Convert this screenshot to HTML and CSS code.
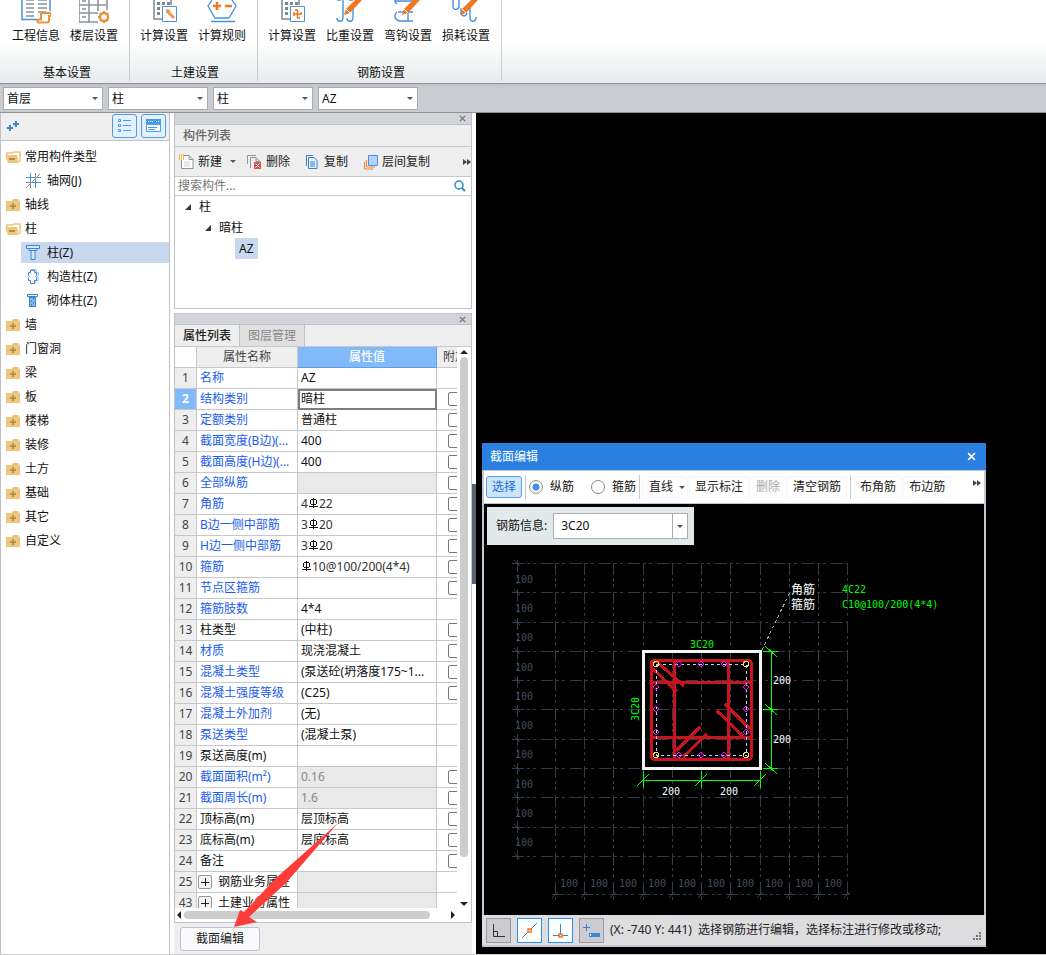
FILE: index.html
```html
<!DOCTYPE html>
<html lang="zh-CN">
<head>
    <meta charset="UTF-8">
    <meta name="viewport" content="width=device-width, initial-scale=1.0">
    <title>截面编辑</title>
    <link rel="stylesheet" href="styles.css">
</head>
<body>

    <!-- Shared icons -->
    <svg class="sprite" aria-hidden="true">
        <symbol id="folder" viewBox="0 0 16 14">
            <path d="M8 1h5l1 2H7z" fill="#e6be7c"/>
            <path d="M1 3h14v10H1z" fill="#eec67e"/>
            <path d="M5 8h6M8 5v6" stroke="#b8914f" stroke-width="2"/>
        </symbol>
        <symbol id="folder-open" viewBox="0 0 16 14">
            <path d="M2 5V3h6l1-1h6v10" fill="none" stroke="#eec67e" stroke-width="1.5"/>
            <path d="M0 5h12l2 8H3z" fill="#eec67e"/>
            <path d="M4 9h6" stroke="#b8914f" stroke-width="2"/>
        </symbol>
        <symbol id="rebar" viewBox="0 0 9 10">
            <path d="M4.500 0v10M2 1.500h5M1.500 2v4M7.500 2v4M2 6.500h5M0 8.500h9" fill="none" stroke="#111" shape-rendering="crispEdges"/>
        </symbol>
        <symbol id="more" viewBox="0 0 8 6">
            <path d="M0 0l4 3-4 3zM4 0l4 3-4 3z" fill="#444"/>
        </symbol>
        <symbol id="close" viewBox="0 0 8 8">
            <path d="M1 1l6 6M7 1L1 7" fill="none" stroke="currentColor" stroke-width="1.5"/>
        </symbol>
        <symbol id="calc" viewBox="0 0 30 24">
            <path d="M5 0v19h8M22 0v5" fill="none" stroke="#7a8790" stroke-width="1.5"/>
            <path d="M8 2h3v3H8zM13 2h3v3h-3zM18 2h3v3h-3zM8 7h3v3H8zM8 12h3v3H8z" fill="#7a8790"/>
            <path d="M13.500 6.500h14v15h-14z" fill="#fff" stroke="#4a90e2"/>
        </symbol>
        <symbol id="pencil" viewBox="0 0 18 16">
            <path d="M0 15l2-6 9-9h7L6 13z" fill="#f07820"/>
            <path d="M2 9l4 4" stroke="#fff"/>
        </symbol>
    </svg>

    <!-- Ribbon -->
    <header class="ribbon">
        <section class="ribbon-group">
            <div class="ribbon-buttons">
                <button class="ribbon-btn">
                    <svg width="30" height="24" viewBox="0 0 30 24"><path d="M1 0v19.500h15M29 0v11" fill="none" stroke="#4a90e2" stroke-width="1.500"/><path d="M5 4h8M17 4h9M5 8h8M17 8h9M5 12h8M17 12h8M5 16h8M5 0h8M17 0h9" stroke="#87929a" stroke-width="1.500"/><path d="M20 13h9c2 0 1 4-1 3v4c0 2-1 2.500-2 2.500h-9c-1 0-1-3 1-3h2z" fill="#fff" stroke="#e8923a" stroke-width="2"/></svg>
                    <span>工程信息</span>
                </button>
                <button class="ribbon-btn">
                    <svg width="30" height="24" viewBox="0 0 30 24"><path d="M0 5h27M0 13h19M0 22h19M0 0v22M10 0v22M19 0v11M28 0v10M3 1h4M3 9h4M3 17h4" fill="none" stroke="#87929a" stroke-width="1.500"/><circle cx="25" cy="17" r="4" fill="#fff" stroke="#e8923a" stroke-width="2.500"/><path d="M25 11v2M25 21v2M19 17h2M29 17h2M21 13l1 1M29 21l-1-1M29 13l-1 1M21 21l1-1" stroke="#e8923a" stroke-width="2"/></svg>
                    <span>楼层设置</span>
                </button>
            </div>
            <div class="ribbon-title">基本设置</div>
        </section>
        <section class="ribbon-group">
            <div class="ribbon-buttons">
                <button class="ribbon-btn">
                    <svg width="30" height="24" viewBox="0 0 30 24"><use href="#calc"/><path d="M18 11l7 7" stroke="#f09040" stroke-width="2.500"/><path d="M17 9v4h4v-3z" fill="#f09040"/></svg>
                    <span>计算设置</span>
                </button>
                <button class="ribbon-btn">
                    <svg width="30" height="24" viewBox="0 0 30 24"><path d="M5 0L1 6l7 12h14l7-12-4-6M4 21.500h24" fill="none" stroke="#4a90e2" stroke-width="1.300"/><path d="M6 6h8M10 2v8M18 6h7" stroke="#f07820" stroke-width="2.500"/></svg>
                    <span>计算规则</span>
                </button>
            </div>
            <div class="ribbon-title">土建设置</div>
        </section>
        <section class="ribbon-group">
            <div class="ribbon-buttons">
                <button class="ribbon-btn">
                    <svg width="30" height="24" viewBox="0 0 30 24"><use href="#calc"/><path d="M16 14h9M20.500 10v8M17 12v4M24 12v2M18 10h3M20 18h3" fill="none" stroke="#f07820" stroke-width="1.500"/></svg>
                    <span>计算设置</span>
                </button>
                <button class="ribbon-btn">
                    <svg width="30" height="24" viewBox="0 0 30 24"><path d="M8 0v17c0 6-6 5-6 1M18 8v9c0 6-6 5-6 1M2 0h4M18 0h-4" fill="none" stroke="#4a90e2" stroke-width="1.400"/><use href="#pencil" x="9" width="18" height="16"/></svg>
                    <span>比重设置</span>
                </button>
                <button class="ribbon-btn">
                    <svg width="30" height="24" viewBox="0 0 30 24"><path d="M2 1h18M5 12h15M4 12c-4 3-2 9 4 9h12M15 8v13M4 4C1 2 2 0 3 0" fill="none" stroke="#4a90e2" stroke-width="1.400"/><use href="#pencil" x="9" width="18" height="16"/></svg>
                    <span>弯钩设置</span>
                </button>
                <button class="ribbon-btn">
                    <svg width="30" height="24" viewBox="0 0 30 24"><path d="M2 0v6c0 5 6 4 6 0V0M10 8v4c0 5 5 5 6 1M19 8v10c0 5 6 4 6-1" fill="none" stroke="#4a90e2" stroke-width="1.400"/><use href="#pencil" x="9" width="18" height="16"/></svg>
                    <span>损耗设置</span>
                </button>
            </div>
            <div class="ribbon-title">钢筋设置</div>
        </section>
    </header>

    <!-- Floor and component switchers -->
    <nav class="filter-bar">
        <div class="combo"><select aria-label="楼层"><option>首层</option></select></div>
        <div class="combo"><select aria-label="类别"><option>柱</option></select></div>
        <div class="combo"><select aria-label="类型"><option>柱</option></select></div>
        <div class="combo"><select aria-label="构件"><option>AZ</option></select></div>
    </nav>

    <main class="main">

        <!-- Component types -->
        <aside class="sidebar">
            <div class="sidebar-tools">
                <svg class="plus" width="14" height="12" viewBox="0 0 14 12"><path d="M0 8h6M3 5v6M6 4h6M9 1v6" stroke="#3f86d8" stroke-width="2"/></svg>
                <button class="view-btn" aria-label="列表">
                    <svg width="15" height="15" viewBox="0 0 15 15"><path d="M1.500 1.500h2v2h-2zM1.500 6.500h2v2h-2zM1.500 11.500h2v2h-2zM6 2.500h8M6 7.500h8M6 12.500h8" fill="none" stroke="#4a9cf0"/></svg>
                </button>
                <button class="view-btn" aria-label="窗口">
                    <svg width="17" height="15" viewBox="0 0 17 15"><path d="M1.500 1.500h14v12h-14z" fill="#fff" stroke="#4a9cf0"/><path d="M1 1h15v6H1z" fill="#4a9cf0"/><path d="M3 3.500h5M11 3.500h3" stroke="#fff" stroke-dasharray="1 1"/><path d="M3 9.500h9M3 11.500h7" stroke="#4a9cf0"/></svg>
                </button>
            </div>
            <ul class="type-tree">
                <li><svg class="folder"><use href="#folder-open"/></svg>常用构件类型</li>
                <li class="child"><svg width="15" height="15" viewBox="0 0 15 15"><path d="M4.500 0v15M9.500 0v15M0 4.500h15M0 9.500h15" stroke="#4a90e2"/><path d="M0 15L14 1" stroke="#e88040"/></svg>轴网(J)</li>
                <li><svg class="folder"><use href="#folder"/></svg>轴线</li>
                <li><svg class="folder"><use href="#folder-open"/></svg>柱</li>
                <li class="child selected"><svg width="15" height="15" viewBox="0 0 15 15"><path d="M.5.5h13v3H.5zM3 3.500v2h8v-2M5 5.500v9h4v-9" fill="#d5e7fb" stroke="#3b86d6"/></svg>柱(Z)</li>
                <li class="child"><svg width="15" height="15" viewBox="0 0 15 15"><path d="M5 .5h5v3h2.500v3L11 7.500l1.500 1v3H10v2H8" fill="#e4f0fd" stroke="#9bc4f0"/><path d="M4.500 1.500h4v2h2v3l-1 1 1 1v3h-2v3h-4v-3h-2v-3l1-1-1-1v-3h2z" fill="#fff" stroke="#3b86d6"/></svg>构造柱(Z)</li>
                <li class="child"><svg width="15" height="15" viewBox="0 0 15 15"><path d="M1.500 1.500h10v2h-10z" fill="#fff" stroke="#3b86d6"/><path d="M3 4h7v10H3z" fill="#3b86d6"/><path d="M4 6h3M8 6h1M4 8h1M6 8h3M4 10h3M8 10h1M4 12h1M6 12h3" stroke="#d5e7fb"/></svg>砌体柱(Z)</li>
                <li><svg class="folder"><use href="#folder"/></svg>墙</li>
                <li><svg class="folder"><use href="#folder"/></svg>门窗洞</li>
                <li><svg class="folder"><use href="#folder"/></svg>梁</li>
                <li><svg class="folder"><use href="#folder"/></svg>板</li>
                <li><svg class="folder"><use href="#folder"/></svg>楼梯</li>
                <li><svg class="folder"><use href="#folder"/></svg>装修</li>
                <li><svg class="folder"><use href="#folder"/></svg>土方</li>
                <li><svg class="folder"><use href="#folder"/></svg>基础</li>
                <li><svg class="folder"><use href="#folder"/></svg>其它</li>
                <li><svg class="folder"><use href="#folder"/></svg>自定义</li>
            </ul>
        </aside>

        <div class="panels">

            <!-- Component list -->
            <section class="panel">
                <div class="panel-strip"><button class="panel-close" aria-label="关闭"><svg width="7" height="7"><use href="#close"/></svg></button></div>
                <h2 class="panel-title">构件列表</h2>
                <div class="panel-tools">
                    <button class="tool new"><svg width="15" height="16" viewBox="0 0 15 16"><path d="M5 1.500h5l4 4v9H2.500V6M10 1.500v4h4" fill="#fff" stroke="#8b969e"/><path d="M5 8h6M5 10h6M5 12h6" stroke="#ccd2d6"/><path d="M0 1h5M0 3h5M0 5h5" stroke="#f5a623" stroke-width="1.500" stroke-dasharray="1 1"/></svg>新建<i class="caret"></i></button>
                    <button class="tool delete"><svg width="15" height="16" viewBox="0 0 15 16"><path d="M.5 10V1.500H9M3.500 14V3.500H9l4 4M9 3.500v4h4" fill="none" stroke="#8b969e"/><path d="M7 8h7v7H7z" fill="#d9534f"/><path d="M8.500 9.500l4 4M12.500 9.500l-4 4" stroke="#fff"/></svg>删除</button>
                    <button class="tool copy"><svg width="15" height="16" viewBox="0 0 15 16"><path d="M1.500 12V1.500H8" fill="none" stroke="#3b7fd0"/><path d="M3.500 3.500H9l3 3v8H3.500z" fill="#e4f0fd" stroke="#3b7fd0"/><path d="M5 8h5M5 10h5M5 12h5" stroke="#3b7fd0"/></svg>复制</button>
                    <button class="tool"><svg width="15" height="16" viewBox="0 0 15 16"><path d="M1.500 8v7H10M3.500 6v7H12" fill="none" stroke="#f08030"/><path d="M5.500 1.500h9v10h-9z" fill="#b3d5fb" stroke="#4a90e2"/></svg>层间复制</button>
                    <button class="more" aria-label="更多"><svg width="8" height="6"><use href="#more"/></svg></button>
                </div>
                <label class="search">
                    <input type="text" placeholder="搜索构件..." aria-label="搜索构件">
                    <svg width="12" height="12" viewBox="0 0 12 12"><circle cx="5" cy="5" r="4" fill="none" stroke="#2a8cc4" stroke-width="1.500"/><path d="M8 8l3 3" stroke="#2a8cc4" stroke-width="2"/></svg>
                </label>
                <ul class="component-tree">
                    <li><i class="twisty"></i>柱</li>
                    <li class="level-2"><i class="twisty"></i>暗柱</li>
                    <li class="level-3"><span class="current">AZ</span></li>
                </ul>
            </section>

            <!-- Properties -->
            <section class="panel properties">
                <div class="panel-strip"><button class="panel-close" aria-label="关闭"><svg width="7" height="7"><use href="#close"/></svg></button></div>
                <div class="tabs">
                    <button class="tab active">属性列表</button>
                    <button class="tab">图层管理</button>
                </div>
                <div class="grid-area">
                    <div class="grid-view">
                        <table class="grid">
                            <colgroup><col class="col-no"><col class="col-name"><col class="col-value"><col class="col-extra"></colgroup>
                            <thead>
                                <tr><td></td><th>属性名称</th><th class="active">属性值</th><th class="clip">附加</th></tr>
                            </thead>
                            <tbody>
                                <tr><th>1</th><td class="key">名称</td><td>AZ</td><td></td></tr>
                                <tr class="active"><th>2</th><td class="key">结构类别</td><td class="editing">暗柱</td><td><input type="checkbox" aria-label="附加 结构类别"></td></tr>
                                <tr><th>3</th><td class="key">定额类别</td><td>普通柱</td><td><input type="checkbox" aria-label="附加 定额类别"></td></tr>
                                <tr><th>4</th><td class="key">截面宽度(B边)(...</td><td>400</td><td><input type="checkbox" aria-label="附加 截面宽度"></td></tr>
                                <tr><th>5</th><td class="key">截面高度(H边)(...</td><td>400</td><td><input type="checkbox" aria-label="附加 截面高度"></td></tr>
                                <tr><th>6</th><td class="key">全部纵筋</td><td class="readonly"></td><td><input type="checkbox" aria-label="附加 全部纵筋"></td></tr>
                                <tr><th>7</th><td class="key">角筋</td><td class="bar">4<svg class="rebar"><use href="#rebar"/></svg>22</td><td><input type="checkbox" aria-label="附加 角筋"></td></tr>
                                <tr><th>8</th><td class="key">B边一侧中部筋</td><td class="bar">3<svg class="rebar"><use href="#rebar"/></svg>20</td><td><input type="checkbox" aria-label="附加 B边一侧中部筋"></td></tr>
                                <tr><th>9</th><td class="key">H边一侧中部筋</td><td class="bar">3<svg class="rebar"><use href="#rebar"/></svg>20</td><td><input type="checkbox" aria-label="附加 H边一侧中部筋"></td></tr>
                                <tr><th>10</th><td class="key">箍筋</td><td class="bar"><svg class="rebar"><use href="#rebar"/></svg>10@100/200(4*4)</td><td><input type="checkbox" aria-label="附加 箍筋"></td></tr>
                                <tr><th>11</th><td class="key">节点区箍筋</td><td></td><td><input type="checkbox" aria-label="附加 节点区箍筋"></td></tr>
                                <tr><th>12</th><td class="key">箍筋肢数</td><td>4*4</td><td></td></tr>
                                <tr><th>13</th><td>柱类型</td><td>(中柱)</td><td><input type="checkbox" aria-label="附加 柱类型"></td></tr>
                                <tr><th>14</th><td class="key">材质</td><td>现浇混凝土</td><td><input type="checkbox" aria-label="附加 材质"></td></tr>
                                <tr><th>15</th><td class="key">混凝土类型</td><td>(泵送砼(坍落度175~1...</td><td><input type="checkbox" aria-label="附加 混凝土类型"></td></tr>
                                <tr><th>16</th><td class="key">混凝土强度等级</td><td>(C25)</td><td><input type="checkbox" aria-label="附加 混凝土强度等级"></td></tr>
                                <tr><th>17</th><td class="key">混凝土外加剂</td><td>(无)</td><td></td></tr>
                                <tr><th>18</th><td class="key">泵送类型</td><td>(混凝土泵)</td><td></td></tr>
                                <tr><th>19</th><td>泵送高度(m)</td><td></td><td></td></tr>
                                <tr><th>20</th><td class="key">截面面积(m²)</td><td class="readonly">0.16</td><td><input type="checkbox" aria-label="附加 截面面积"></td></tr>
                                <tr><th>21</th><td class="key">截面周长(m)</td><td class="readonly">1.6</td><td><input type="checkbox" aria-label="附加 截面周长"></td></tr>
                                <tr><th>22</th><td>顶标高(m)</td><td>层顶标高</td><td><input type="checkbox" aria-label="附加 顶标高"></td></tr>
                                <tr><th>23</th><td>底标高(m)</td><td>层底标高</td><td><input type="checkbox" aria-label="附加 底标高"></td></tr>
                                <tr><th>24</th><td>备注</td><td></td><td><input type="checkbox" aria-label="附加 备注"></td></tr>
                                <tr><th>25</th><td class="group"><button class="expand" aria-label="展开"></button>钢筋业务属性</td><td class="readonly"></td><td></td></tr>
                                <tr><th>43</th><td class="group"><button class="expand" aria-label="展开"></button>土建业务属性</td><td class="readonly"></td><td></td></tr>
                            </tbody>
                        </table>
                    </div>
                    <div class="scroll-v"><i class="arrow-up"></i><div class="thumb"></div><i class="arrow-down"></i></div>
                </div>
                <div class="scroll-h"><i class="arrow-left"></i><div class="thumb"></div><i class="arrow-right"></i></div>
            </section>
            <div class="panel-footer"><button class="edit-btn">截面编辑</button></div>

            <svg class="pointer-arrow" viewBox="0 0 105 105" aria-hidden="true"><path d="M0 104L6 87l4 2 32-34 62-55-52 60-37 34 8 5z" fill="#fb3c38"/></svg>
        </div>

        <div class="splitter"><button aria-label="折叠"></button></div>

        <!-- Drawing area with the section editor window -->
        <div class="workspace">
            <section class="dialog">
                <header class="dialog-title">截面编辑<button aria-label="关闭"><svg width="9" height="9"><use href="#close"/></svg></button></header>
                <div class="dialog-tools">
                    <button class="dtool picked">选择</button>
                    <span class="divider"></span>
                    <label class="radio"><input type="radio" name="bar" checked>纵筋</label>
                    <label class="radio"><input type="radio" name="bar">箍筋</label>
                    <span class="divider"></span>
                    <button class="dtool line">直线<i class="caret"></i></button>
                    <button class="dtool">显示标注</button>
                    <button class="dtool" disabled>删除</button>
                    <button class="dtool">清空钢筋</button>
                    <span class="divider"></span>
                    <button class="dtool">布角筋</button>
                    <button class="dtool">布边筋</button>
                    <button class="more" aria-label="更多"><svg width="8" height="6"><use href="#more"/></svg></button>
                </div>
                <div class="drawing">
                    <svg class="section-drawing" viewBox="484 504 500 411">
                        <!-- 100 mm grid -->
                        <g class="grid-lines">
                            <path d="M512 563.500H848M512 592.500H848M512 622.500H848M512 651.500H848M512 680.500H848M512 709.500H848M512 739.500H848M512 768.500H848M512 797.500H848M512 827.500H848M512 856.500H848M552 894.500H850"/>
                            <path d="M517.500 560V860M555.500 563V900M584.500 563V900M613.500 563V900M643.500 563V900M672.500 563V900M701.500 563V900M730.500 563V900M760.500 563V900M789.500 563V900M818.500 563V900M847.500 563V900"/>
                        </g>
                        <path class="grid-ticks" d="M514 560l6 6M514 589l6 6M514 619l6 6M514 648l6 6M514 677l6 6M514 706l6 6M514 736l6 6M514 765l6 6M514 794l6 6M514 824l6 6M514 853l6 6M552 898l6-6M581 898l6-6M610 898l6-6M640 898l6-6M669 898l6-6M698 898l6-6M727 898l6-6M757 898l6-6M786 898l6-6M815 898l6-6M844 898l6-6"/>
                        <g class="grid-text">
                            <text x="515" y="583">100</text><text x="515" y="612">100</text><text x="515" y="641">100</text><text x="515" y="671">100</text><text x="515" y="700">100</text>
                            <text x="515" y="729">100</text><text x="515" y="758">100</text><text x="515" y="788">100</text><text x="515" y="817">100</text><text x="515" y="846">100</text>
                            <text x="560" y="887">100</text><text x="590" y="887">100</text><text x="619" y="887">100</text><text x="648" y="887">100</text><text x="678" y="887">100</text>
                            <text x="707" y="887">100</text><text x="736" y="887">100</text><text x="765" y="887">100</text><text x="795" y="887">100</text><text x="824" y="887">100</text>
                        </g>
                        <!-- Concrete outline -->
                        <rect class="outline" x="643.500" y="651.500" width="117" height="117"/>
                        <!-- Stirrups -->
                        <g class="stirrup">
                            <rect x="651.500" y="660.500" width="100" height="99" rx="3"/>
                            <path d="M674.500 660V759M728.500 660V759M652 682.500H751M652 737.500H751"/>
                            <path d="M653 669l24 23M656 661l28 25M717 711l26 25M725 704l25 25M700 727l-24 24M707 734l-24 23"/>
                        </g>
                        <rect class="cover" x="656.500" y="664.500" width="90" height="91"/>
                        <g class="corner-bar"><circle cx="656" cy="664" r="2.500"/><circle cx="746" cy="664" r="2.500"/><circle cx="656" cy="755" r="2.500"/><circle cx="746" cy="755" r="2.500"/></g>
                        <path class="side-bar" d="M676 664l3-3 3 3-3 3zM698 664l3-3 3 3-3 3zM721 664l3-3 3 3-3 3zM676 755l3-3 3 3-3 3zM698 755l3-3 3 3-3 3zM721 755l3-3 3 3-3 3zM653 687l3-3 3 3-3 3zM653 709l3-3 3 3-3 3zM653 732l3-3 3 3-3 3zM743 687l3-3 3 3-3 3zM743 709l3-3 3 3-3 3zM743 732l3-3 3 3-3 3z"/>
                        <!-- Dimensions -->
                        <path class="dim" d="M643 780.500H761M643.500 771v17M701.500 771v17M760.500 771v17M771.500 651V769M763 651.500h15M763 709.500h15M763 768.500h15M637 786l12-12M695 786l12-12M754 786l12-12M765 646l12 11M765 704l12 11M765 763l12 11"/>
                        <path class="leader" d="M762 650L790 592"/>
                        <g class="dim-text"><text x="773" y="684">200</text><text x="773" y="743">200</text><text x="662" y="795">200</text><text x="720" y="795">200</text></g>
                        <g class="bar-text"><text x="690" y="648">3C20</text><text transform="translate(639 721) rotate(-90)">3C20</text><text x="842" y="593">4C22</text><text x="842" y="608">C10@100/200(4*4)</text></g>
                        <g class="note"><text x="791" y="594">角筋</text><text x="791" y="609">箍筋</text></g>
                    </svg>
                    <div class="bar-info">
                        <label for="bar-info">钢筋信息:</label>
                        <div class="combo boxed"><select id="bar-info"><option>3C20</option></select></div>
                    </div>
                </div>
                <footer class="status">
                    <button class="snap" aria-label="正交"><svg width="15" height="15" viewBox="0 0 15 15"><path d="M2.500 1v12.500H14M2.500 8.500h4v5" fill="none" stroke="#333"/></svg></button>
                    <button class="snap on" aria-label="中点"><svg width="17" height="17" viewBox="0 0 17 17"><path d="M1 16L16 1" stroke="#3b7fd0"/><path d="M7 7h3v3H7z" fill="#fff" stroke="#f07820" stroke-width="1.500"/></svg></button>
                    <button class="snap on" aria-label="垂点"><svg width="17" height="17" viewBox="0 0 17 17"><path d="M8.500 2v12M1 13.500h15" stroke="#3b7fd0"/><path d="M7 12h3v3H7z" fill="#fff" stroke="#f07820" stroke-width="1.500"/></svg></button>
                    <button class="snap" aria-label="动态输入"><svg width="17" height="17" viewBox="0 0 17 17"><path d="M0 5.500h7M3.500 2v7" stroke="#3b7fd0"/><path d="M6 11h11v4H6z" fill="#3b86d6"/><path d="M7.500 12v2" stroke="#fff"/></svg></button>
                    <span class="status-text">(X: -740 Y: 441)&nbsp; 选择钢筋进行编辑，选择标注进行修改或移动;</span>
                    <svg class="grip" width="9" height="9" viewBox="0 0 9 9"><path d="M6 0h2v2H6zM3 3h2v2H3zM6 3h2v2H6zM0 6h2v2H0zM3 6h2v2H3zM6 6h2v2H6z" fill="#777"/></svg>
                </footer>
            </section>
        </div>
    </main>

</body>
</html>
```
FILE: styles.css
```css
* {
    box-sizing: border-box;
}
body {
    display: flex;
    flex-direction: column;
    height: 100vh;
    margin: 0;
    overflow: hidden;
    background-color: #fff;
    border-bottom: 1px solid #ccc;
    color: #111;
    font-family: "Noto Sans", "Noto Sans CJK SC", sans-serif;
    font-size: 12px;
    line-height: 20px;
}
button, input, select {
    margin: 0;
    padding: 0;
    border: none;
    background: none;
    color: inherit;
    font: inherit;
}
svg { flex: none; display: block; }
ul { list-style: none; margin: 0; padding: 0; }
.sprite { position: absolute; width: 0; height: 0; }

/* Ribbon */
.ribbon {
    display: flex;
    flex: none;
    height: 84px;
    background: linear-gradient(#fff 50%, #e7ebec);
    border-bottom: 1px solid #8d9198;
}
.ribbon-group {
    display: flex;
    flex-direction: column;
    justify-content: space-between;
    height: 81px;
    padding: 0 6px 0 5px;
    border-right: 1px solid #cbcdd0;
}
.ribbon-group:first-child { padding-left: 7px; }
.ribbon-buttons { display: flex; }
.ribbon-btn {
    display: flex;
    flex-direction: column;
    align-items: center;
    gap: 2px;
    width: 58px;
}
.ribbon-title {
    padding-left: 4px;
    line-height: 16px;
    text-align: center;
}

/* Filter bar */
.filter-bar {
    display: flex;
    flex: none;
    gap: 5px;
    padding: 3px 3px 2px;
    background: linear-gradient(#bfc1c6, #c9ccd0 4px);
    border-bottom: 1px solid #8d9198;
}
.combo {
    position: relative;
    width: 100px;
    height: 23px;
    background-color: #fff;
    border: 1px solid #aaacaf;
}
.combo select {
    appearance: none;
    width: 100%;
    height: 100%;
    padding: 0 20px 0 3px;
}
.combo::after {
    content: "";
    position: absolute;
    right: 4px;
    top: 9px;
    border: 3px solid transparent;
    border-top-color: #555;
    border-bottom: none;
    pointer-events: none;
}
.caret {
    border: 3px solid transparent;
    border-top-color: #555;
    border-bottom: none;
}

.main {
    display: flex;
    flex: 1;
    min-height: 0;
}

/* Sidebar */
.sidebar {
    flex: none;
    width: 170px;
    border: solid #bfc1c8;
    border-width: 0 1px;
}
.sidebar-tools {
    display: flex;
    align-items: center;
    gap: 4px;
    height: 28px;
    padding: 0 3px 2px 6px;
    background-color: #eee;
    border-bottom: 1px solid #bfc1c8;
}
.plus { margin-right: auto; }
.view-btn {
    display: flex;
    align-items: center;
    justify-content: center;
    width: 25px;
    height: 24px;
    background-color: #e4f0fd;
    border: 1px solid #4a9cf0;
    border-radius: 3px;
}
.type-tree { padding-top: 5px; }
.type-tree li {
    display: flex;
    align-items: center;
    gap: 4px;
    height: 21px;
    margin-bottom: 3px;
    padding-left: 4px;
}
.folder { width: 16px; height: 14px; }
.type-tree .child {
    gap: 6px;
    margin-left: 20px;
    padding-left: 5px;
}
.type-tree .selected { background-color: #c8d9ef; }

/* Docked panels */
.panels {
    position: relative;
    display: flex;
    flex-direction: column;
    flex: none;
    width: 298px;
    margin-left: 4px;
}
.panel {
    border: 1px solid #bfc1c8;
    border-top: none;
}
.panel-strip {
    display: flex;
    justify-content: flex-end;
    align-items: center;
    height: 12px;
    padding-right: 5px;
    background-color: #d3d4d9;
    border-bottom: 1px solid #bfc1c8;
    color: #777;
}
.panel-title {
    height: 22px;
    margin: 0;
    padding-left: 8px;
    background-color: #eee;
    border-bottom: 1px solid #c6c8cc;
    color: #666;
    font-size: 12px;
    font-weight: 500;
    line-height: 21px;
}
.panel-tools {
    display: flex;
    align-items: center;
    height: 30px;
    padding-left: 4px;
    background-color: #eee;
    border-bottom: 1px solid #c6c8cc;
    color: #222;
}
.tool {
    display: flex;
    align-items: center;
    gap: 4px;
}
.tool .caret { margin-left: 4px; }
.new { margin-right: 11px; }
.delete, .copy { margin-right: 15px; }
.more { margin-left: auto; }
.search {
    display: flex;
    align-items: center;
    height: 19px;
    padding: 0 5px 0 3px;
    border-bottom: 1px solid #c6c8cc;
}
.search input {
    flex: 1;
    height: 18px;
    outline: none;
}
.search input::placeholder { color: #777; }
.component-tree { height: 112px; }
.component-tree li {
    display: flex;
    align-items: center;
    gap: 8px;
    height: 21px;
    padding-left: 10px;
}
.component-tree .level-2 { padding-left: 30px; }
.component-tree .level-3 { padding-left: 60px; }
.twisty {
    border: solid transparent;
    border-width: 0 0 6px 6px;
    border-bottom-color: #333;
}
.current {
    padding: 0 4px;
    background-color: #c8d9ef;
    line-height: 21px;
}

/* Property grid */
.properties {
    display: flex;
    flex-direction: column;
    flex: 1;
    min-height: 0;
    margin-top: 4px;
    border-top: 1px solid #bfc1c8;
}
.properties .panel-strip {
    flex: none;
    height: 11px;
}
.tabs {
    display: flex;
    flex: none;
    height: 22px;
    background-color: #eee;
    border-bottom: 1px solid #c6c8cc;
}
.tab {
    padding: 0 8px;
    background-color: #e0e0e0;
    border-right: 1px solid #bfc1c8;
    color: #888;
}
.tab.active {
    background-color: #eee;
    color: #222;
    font-weight: 500;
}
.grid-area {
    display: flex;
    flex: 1;
    min-height: 0;
}
.grid-view {
    flex: 1;
    overflow: hidden;
}
.grid {
    width: 100%;
    table-layout: fixed;
    border-collapse: separate;
    border-spacing: 0;
}
.col-no { width: 22px; }
.col-name { width: 101px; }
.col-value { width: 139px; }
.grid th, .grid td {
    height: 21px;
    padding: 0 3px;
    overflow: hidden;
    border: solid #c6c8cc;
    border-width: 0 1px 1px 0;
    line-height: 20px;
    text-align: left;
    white-space: nowrap;
}
.grid th {
    padding: 0;
    background-color: #eee;
    color: #444;
    font-weight: 400;
    text-align: center;
}
.grid thead .active {
    background-color: #81b9fb;
    border-color: #5a9ff0;
    color: #fff;
    font-weight: 500;
}
.grid .active th {
    background-color: #81b9fb;
    color: #fff;
    font-weight: 700;
}
.grid th.clip {
    padding-left: 6px;
    text-align: left;
}
.grid tr > :last-child { border-right: none; }
.grid td.key { color: #1a5cf0; }
.grid td.readonly {
    background-color: #e9e9e9;
    color: #888;
}
.grid td.editing {
    outline: 2px solid #7d7d7d;
    outline-offset: -2px;
}
.grid td.bar { color: #333; }
.rebar {
    display: inline-block;
    width: 9px;
    height: 10px;
    margin: 0 1px;
}
.grid input {
    appearance: none;
    display: block;
    width: 14px;
    height: 14px;
    margin-left: 8px;
    border: 1px solid #777;
    border-radius: 2px;
}
.grid td.group { padding-left: 1px; }
.expand {
    width: 14px;
    height: 14px;
    margin-right: 6px;
    background:
        linear-gradient(#222, #222) center / 8px 1px no-repeat,
        linear-gradient(#222, #222) center / 1px 8px no-repeat,
        #f4f4f4;
    border: 1px solid #999;
    border-radius: 2px;
    vertical-align: top;
    margin-top: 3px;
}
.scroll-v {
    display: flex;
    flex-direction: column;
    align-items: center;
    width: 14px;
    padding: 3px 0 2px;
}
.scroll-v .thumb {
    width: 8px;
    height: 90%;
    margin: 3px 0 auto;
}
.scroll-h {
    display: flex;
    flex: none;
    align-items: center;
    height: 14px;
    padding: 0 16px 0 2px;
}
.scroll-h .thumb {
    width: 246px;
    height: 8px;
    margin: 0 auto 0 3px;
}
.thumb {
    background-color: #cdcdcd;
    border-radius: 4px;
}
.arrow-up, .arrow-down, .arrow-left, .arrow-right {
    border: 4px solid transparent;
}
.arrow-up { border-top: none; border-bottom-color: #222; }
.arrow-down { border-bottom: none; border-top-color: #222; }
.arrow-left { border-left: none; border-right-color: #222; }
.arrow-right { border-right: none; border-left-color: #222; }
.panel-footer {
    flex: none;
    height: 31px;
    padding: 4px 6px;
    background-color: #eee;
}
.edit-btn {
    width: 80px;
    height: 24px;
    background-color: #fafafc;
    border: 1px solid #bcc3d4;
    border-radius: 3px;
    color: #222;
}
.pointer-arrow {
    position: absolute;
    left: 60px;
    bottom: 26px;
    width: 105px;
    height: 105px;
    pointer-events: none;
}
.splitter {
    display: flex;
    align-items: center;
    flex: none;
    width: 4px;
}
.splitter button {
    width: 4px;
    height: 100px;
    background-color: #596270;
}

/* Section editor window */
.workspace {
    position: relative;
    flex: 1;
    background-color: #000;
}
.dialog {
    position: absolute;
    left: 6px;
    top: 330px;
    width: 504px;
    background-color: #c3c6d0;
}
.dialog-title {
    display: flex;
    align-items: center;
    justify-content: space-between;
    height: 27px;
    padding: 0 10px 0 8px;
    background-color: #2b7fe0;
    color: #fff;
}
.dialog-tools {
    display: flex;
    align-items: center;
    gap: 1px;
    height: 33px;
    margin: 1px 2px 0;
    padding: 0 3px 0 2px;
    background-color: #fff;
    border-bottom: 1px solid #c3c6d0;
}
.dtool {
    height: 22px;
    padding: 0 5px;
    border: 1px solid #f6f6f6;
    border-radius: 3px;
    color: #222;
}
.dtool:disabled { color: #aaa; }
.dtool.picked {
    background-color: #cce4fc;
    border-color: #5aa2ee;
    color: #1a6fd0;
}
.dtool.line {
    display: flex;
    align-items: center;
    gap: 6px;
    padding-right: 2px;
}
.divider {
    width: 1px;
    height: 24px;
    margin: 0 2px;
    background-color: #c6c8cc;
}
.radio {
    display: flex;
    align-items: center;
    gap: 7px;
}
.radio + .radio { margin-left: 16px; }
.radio input {
    appearance: none;
    width: 14px;
    height: 14px;
    border: 1px solid #888;
    border-radius: 50%;
}
.radio input:checked { background: radial-gradient(circle, #3b8ff0 3px, #fff 4px); }
.dialog-tools .more {
    align-self: flex-start;
    padding-top: 9px;
}
.drawing {
    position: relative;
    margin: 0 2px;
    background-color: #000;
}
.section-drawing {
    width: 100%;
    shape-rendering: crispEdges;
}
.section-drawing path, .section-drawing rect, .section-drawing circle { fill: none; }
.section-drawing text {
    font-family: "DejaVu Sans Mono", monospace;
    font-size: 10px;
}
.grid-lines { stroke: #353c49; stroke-dasharray: 12 3 3 3 3 5; }
.section-drawing .grid-ticks { stroke: #353c49; }
.grid-text { fill: #464e5c; }
.outline { stroke: #f4f4f4; stroke-width: 3; }
.stirrup { stroke: #c8141e; stroke-width: 3; }
.cover { stroke: #b8d4ff; stroke-dasharray: 3 3; }
.corner-bar { stroke: #ffe650; }
.side-bar { stroke: #f0f; }
.dim { stroke: #0f0; }
.leader { stroke: #aaa; stroke-dasharray: 3 3; }
.dim-text, .note { fill: #fff; }
.bar-text { fill: #0f0; }
.section-drawing .note text {
    font-family: "Noto Sans CJK SC", sans-serif;
    font-size: 12px;
}
.bar-info {
    position: absolute;
    left: 3px;
    top: 3px;
    display: flex;
    align-items: center;
    gap: 6px;
    padding: 6px 6px 6px 9px;
    background-color: #e2e9eb;
}
.combo.boxed {
    width: 135px;
    height: 26px;
}
.combo.boxed select {
    padding-left: 7px;
    background: linear-gradient(#aaacaf, #aaacaf) right 14px top / 1px 100% no-repeat;
}
.combo.boxed::after { top: 11px; }
.status {
    display: flex;
    align-items: center;
    gap: 6px;
    height: 32px;
    padding: 0 4px;
    background-color: #dddde0;
    border: solid #c3c6d0;
    border-width: 0 0 2px;
    color: #222;
}
.snap {
    display: flex;
    align-items: center;
    justify-content: center;
    width: 25px;
    height: 25px;
    background-color: #ccccd0;
    border: 1px solid #97999c;
}
.snap.on {
    background-color: #fff;
    border-color: #2a90f5;
}
.status-text { white-space: nowrap; }
.grip {
    align-self: flex-end;
    margin: 0 0 4px auto;
}
```
